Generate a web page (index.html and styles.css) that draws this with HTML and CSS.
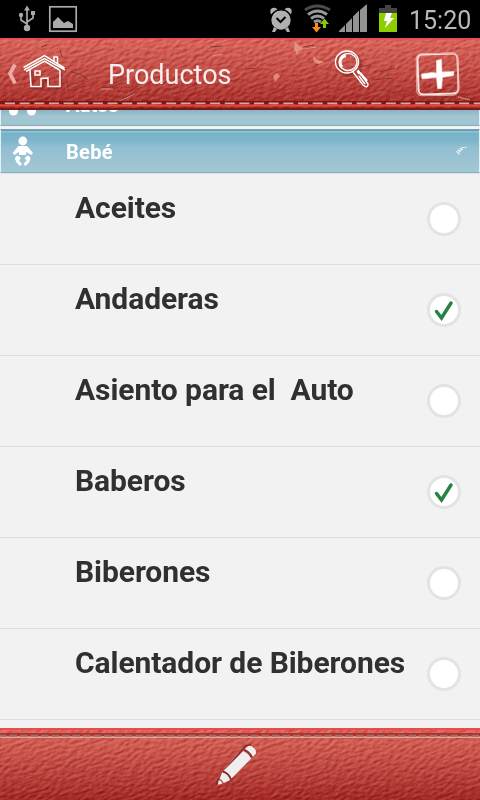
FILE: index.html
```
<!DOCTYPE html>
<html lang="es">
<head>
<meta charset="utf-8">
<title>Productos</title>
<link rel="stylesheet" href="styles.css">
</head>
<body>
<div class="screen">
  <div class="status">
    <svg class="status-icons" width="80" height="38" viewBox="0 0 80 38" fill="none" stroke="#a9a9a9" stroke-width="1.7">
      <path d="M27 29V9M27 24l-6-4v-4M27 22l6-4v-5"/>
      <path d="M27 5.500l3 5h-6zM31 11h4v4h-4z" fill="#a9a9a9" stroke="none"/>
      <circle cx="27" cy="28" r="3.2" fill="#a9a9a9" stroke="none"/><circle cx="21" cy="15" r="2.2" fill="#a9a9a9" stroke="none"/>
      <rect x="49.8" y="6.8" width="26.4" height="24.4"/>
      <path d="M53 28v-6l5-5 6 6 4-2 5 3v4z" fill="#a9a9a9" stroke="none"/>
    </svg>
    <svg class="status-icons" width="135" height="38" viewBox="265 0 135 38">
      <g fill="#b0b0b0">
        <circle cx="281" cy="20" r="9.7"/>
        <circle cx="274" cy="11.500" r="3.7"/><circle cx="288" cy="11.500" r="3.7"/>
        <path d="M274 27l3 2-2 3h-3zM288 27l-3 2 2 3h3z"/>
      </g>
      <path d="M271 16q4-6 9-6.500h2q5 .5 9 6.500" fill="none" stroke="#000" stroke-width="1.4"/>
      <path d="M276.500 18l4 4 5-5" fill="none" stroke="#000" stroke-width="2"/>
      <g fill="none" stroke-width="2.9">
        <path d="M305 10q12-8 25 0" stroke="#4b4b4b"/>
        <path d="M308 14.500q9.500-7 19 0M311 18.500q6.500-5 13 0M314 22q3.500-2.500 7 0" stroke="#999"/>
      </g>
      <path d="M315 23h3v4h3l-4.500 5.500-4.500-5.500h3z" fill="#f58c1f"/>
      <path d="M323 28v-4h-3l4.500-5.500 4.500 5.500h-3v4z" fill="#86c900"/>
      <path d="M339 32v-1l6-6v7zM346 32v-8l6-6v14zM353 32v-15.500l6-6v21.500zM360 32v-22l7-6v28z" fill="#939393"/>
      <path d="M379 13v-5h6v-3h6v3h6v5z" fill="#444"/>
      <path d="M379 13h18v19h-18z" fill="#8fce00"/>
      <path d="M386 13h6l-2 5h4l-9 10 2-7h-3z" fill="#fff"/>
    </svg>
    <span class="clock">15:20</span>
  </div>

  <header class="bar top">
    <svg class="leather" width="480" height="72" viewBox="0 0 480 72">
      <defs>
        <linearGradient id="red" x2="0" y2="1"><stop offset="0" stop-color="#d9665c"/><stop offset=".35" stop-color="#c9544b"/><stop offset=".75" stop-color="#b33b36"/><stop offset="1" stop-color="#a32824"/></linearGradient>
        <filter id="grain" x="0" y="0" width="100%" height="100%" color-interpolation-filters="sRGB">
          <feTurbulence type="fractalNoise" baseFrequency=".16 .34" numOctaves="2" seed="8"/>
          <feColorMatrix values="0 0 0 0 0  0 0 0 0 0  0 0 0 0 0  1 0 0 0 0"/>
          <feDiffuseLighting surfaceScale="1.3" diffuseConstant=".76" lighting-color="#fff"><feDistantLight azimuth="245" elevation="42"/></feDiffuseLighting>
        </filter>
      </defs>
      <rect width="480" height="72" fill="url(#red)"/>
      <g transform="rotate(-18 240 36)"><rect class="grain" x="-20" y="-80" width="520" height="232" filter="url(#grain)"/></g>
      <path d="M0 .7h480" stroke="#ed4a4b" stroke-width="1.500"/>
      <g fill="none" stroke="#6e302b" stroke-opacity=".75">
        <path d="M41 9l6-2M60 12l2 7M72 34l10 3 6 5M66 41l3 12M73 50l12-5M101 50l10-1 9-3M118 63l17-8M130 53l8-5M210 9l12-1M303 9l11-2M310 25l7-4M358 29l13-2M380 34l15-4M372 42l21-2M409 52l-18 3M456 56l16 5M245 31l14-1"/>
      </g>
      <path d="M117 64l18-8M101 51l12 0M317 25l6-1M304 11l12-2M458 59l12 3M212 18l10-2" stroke="#e8a58e" stroke-opacity=".75" fill="none"/>
      <path d="M295 4l6 5 3 2-5 2-2 4-3-6zM313 18l5 4 5 1-4 3-5-2zM273 38l4-3 3 3-5 6z" fill="#eba092" opacity=".75"/>
      <path d="M0 64.500h480" stroke="#7d1716" stroke-width="3"/>
      <path d="M5 65.300h475" stroke="#d4a7a0" stroke-width="1.800" stroke-dasharray="10 4.650"/>
      <path d="M0 67.700h480" stroke="#e34b3d" stroke-width="1.800"/>
      <path d="M0 71h480" stroke="#7d1817" stroke-width="2"/>
    </svg>
    <svg class="home" width="68" height="72" viewBox="0 0 68 72" fill="none" stroke="#fff">
      <path d="M15 26.500l-5 9 5 10" stroke="#ecaaa5" stroke-width="3.800"/>
      <g stroke="#7c2420" stroke-opacity=".5" stroke-width="3" transform="translate(1 2)"><path d="M24 31l21-12 20 12M31 31l1 17h10v-7h6v7h12V31"/></g>
      <path d="M23.500 29.500L44.500 17.500l20 12.500M24 32l20.500-11.500L65 32M26 33.500l18.500-10.500 15 9" stroke-width="1.500"/>
      <path d="M54 23v-4h3.500v6M30 32l1 16.500h10v-8l7-.5v8.500h12V32" stroke-width="1.500"/>
      <path d="M35 33h5v4h-5z" stroke-width="1.500"/>
    </svg>
    <h1>Productos</h1>
    <svg class="tools" width="150" height="72" viewBox="330 38 150 72" fill="none" stroke="#fff">
      <g stroke="#7c2420" stroke-opacity=".4" stroke-width="4"><path d="M359 71l10 14M419 96h35V93"/><circle cx="349" cy="64" r="11"/></g>
      <g stroke-width="1.400">
        <ellipse cx="347" cy="62" rx="11.500" ry="11"/><ellipse cx="348" cy="62" rx="9" ry="8.500"/>
        <path d="M342 67c-4-6 0-11 4-11" stroke-width="2.500"/>
        <path d="M353 72l10 13q5 4 5-1l-10-14M357 71l2 3"/>
        <path d="M359 76l6 8" stroke-width="1.500"/><path d="M360 73l7 8" stroke-width="2.500"/>
      </g>
      <rect x="418" y="54" width="40" height="40" rx="5" transform="rotate(-2 438 74)" stroke-width="2" stroke="#f8e5e2"/>
      <rect x="416.500" y="53.500" width="41.500" height="42" rx="5" transform="rotate(-1 438 74)" stroke="#e9aaa5" stroke-width="1"/>
      <path d="M421.500 74l10-1.500 5 .5V60.500l5-1 .5 12.500 12-.5-.5 4-11 2-1 11h-4l-1-11-14.500 1.500z" fill="#fff" stroke="#f5d9d6" stroke-width=".7"/>
    </svg>
  </header>

  <main>
    <div class="cat prev">
      <svg width="66" height="6" viewBox="0 0 66 6" fill="#fff"><circle cx="13.500" cy="1" r="4.500"/><circle cx="31.500" cy="1" r="4.500"/></svg>
      <span>Autos</span>
    </div>
    <div class="cat open">
      <svg width="66" height="43" viewBox="0 0 66 43" fill="#fff">
        <circle cx="22.800" cy="11" r="4.400"/>
        <path d="M18.500 16h8.500l6 7-1.800 2-5-3v3h-7.200v-3l-4.500 3-2-2z"/>
        <path d="M15 29q0-3 3-3.500l3 2.500-2 2.500 3 3.500-2 2q-4-3-5-7zM30.500 29q0-3-3-3.500l-3 2.500 2 2.500-3 3.500 2 2q4-3 5-7z"/>
      </svg>
      <span>Bebé</span>
      <svg class="chev" width="14" height="12" viewBox="0 0 14 12" fill="none" stroke="#f2fafc" stroke-width="1.200"><path d="M11.500 1.500H7l-5 4 2 3M8 3L5 5 4 8" stroke-dasharray="2 .7"/></svg>
    </div>
    <ul>
      <li><span>Aceites</span><i class="check"></i></li>
      <li><span>Andaderas</span><i class="check"><svg viewBox="0 0 34 34"><path d="M9.500 18.500l5 6.500L24 10"/></svg></i></li>
      <li><span>Asiento para el&nbsp; Auto</span><i class="check"></i></li>
      <li><span>Baberos</span><i class="check"><svg viewBox="0 0 34 34"><path d="M9.500 18.500l5 6.500L24 10"/></svg></i></li>
      <li><span>Biberones</span><i class="check"></i></li>
      <li><span>Calentador de Biberones</span><i class="check"></i></li>
    </ul>
  </main>

  <footer class="bar bottom">
    <svg class="leather" width="480" height="72" viewBox="0 0 480 72">
      <rect width="480" height="72" fill="url(#red)"/>
      <g transform="rotate(-18 240 36)"><rect class="grain" x="-20" y="-80" width="520" height="232" filter="url(#grain)"/></g>
      <path d="M0 1h480" stroke="#e94c4b" stroke-width="2"/>
      <path d="M0 6.500h480" stroke="#b92e2a" stroke-width="3"/>
      <path d="M0 9.300h480" stroke="#e6a58e" stroke-width="1.500"/>
      <path d="M-1 7.700h481" stroke="#8b7771" stroke-width="2" stroke-dasharray="7.500 3"/>
    </svg>
    <svg class="pencil" width="48" height="48" viewBox="0 0 48 48">
      <g transform="translate(3.500 42) rotate(-45.500)" fill="#efefef">
        <path d="M-2-1L3-3.500 46-7.500l5 3" fill="none" stroke="#7c302c" stroke-width="1.500"/>
        <path d="M-1 0L3-2.500Q4.500 0 3 2.500z"/><path d="M4.500-3L11-5.500q3 5.500 0 11L4.500 3q1-3 0-6z"/><path d="M13-5.500H41q2 5.500 0 11H13q2-5.500 0-11z"/><path d="M43.500-5.500h3q4 0 4 5.500t-4 5.500h-3q2-5.500 0-11z"/>
        <path d="M12-5.500q3 5.500 0 11M42.300-6q2 5.500 0 11.500" fill="none" stroke="#7c302c" stroke-width="1.500"/>
      </g>
    </svg>
  </footer>
</div>
</body>
</html>
```
FILE: styles.css
```
* { box-sizing: border-box; }
body { margin: 0; font-family: Roboto, sans-serif; background: #f2f2f2; }
svg { display: block; flex: none; }
.screen { width: 480px; height: 800px; display: flex; flex-direction: column; overflow: hidden; }
.status { height: 38px; flex: none; background: #000; display: flex; }
.status-icons + .status-icons { margin-left: 185px; }
.clock { color: #b9b9b9; font-size: 25px; line-height: 41px; margin-left: 9px; letter-spacing: 0; white-space: nowrap; }
.bar { height: 72px; flex: none; position: relative; display: flex; overflow: hidden; }
.leather { position: absolute; inset: 0; }
.grain { mix-blend-mode: soft-light; }
.home, .tools, .pencil, h1 { position: relative; }
h1 { margin: 0 0 0 40px; width: 222px; font-size: 27px; font-weight: 400; line-height: 74px; color: #f5eeee; }
main { flex: 1; overflow: hidden; background: #f2f2f2; }
.cat { display: flex; color: #fff; font-size: 20px; font-weight: 700; border: solid #e4f0f3; border-width: 0 1px; }
.cat svg:first-child { margin-left: -1px; }
.prev { height: 16px; overflow: hidden; background: linear-gradient(#86b4c3, #a1c6d2 6px); border-bottom: 1px solid #7caebb; }
.prev span { line-height: 20px; margin-top: -15px; }
.open { height: 44px; margin-top: 3px; border-top: 1px solid #7aa6b3; border-bottom: 1px solid #85b1bc; background: linear-gradient(#5f9eb3 0 1px, #93c4d3 1px 2px, #78b3ca 3px, #7db5cb 10px, #91bfd1 17px, #a3c7d4); box-shadow: 0 1px #dce6e8; }
.open span { line-height: 45px; width: 389px; letter-spacing: .3px; }
.chev { margin-top: 16px; }
ul { list-style: none; padding: 0; margin: 1px 0 0; }
li { height: 91px; border-bottom: 1px solid #dedede; display: flex; justify-content: space-between; padding: 0 19px 0 75px; }
li span { font-size: 30px; font-weight: 700; color: #303030; line-height: 35px; margin-top: 16px; letter-spacing: -.07px; white-space: nowrap; }
.check { width: 34px; height: 34px; margin: 27.5px 0 0; border: 3px solid #e3e3e3; border-radius: 50%; background: #fff; }
.check svg { width: 34px; height: 34px; margin: -3px; fill: none; stroke: #278243; stroke-width: 3.5; stroke-linecap: round; }
.pencil { margin: 14px 0 0 215px; }
```
